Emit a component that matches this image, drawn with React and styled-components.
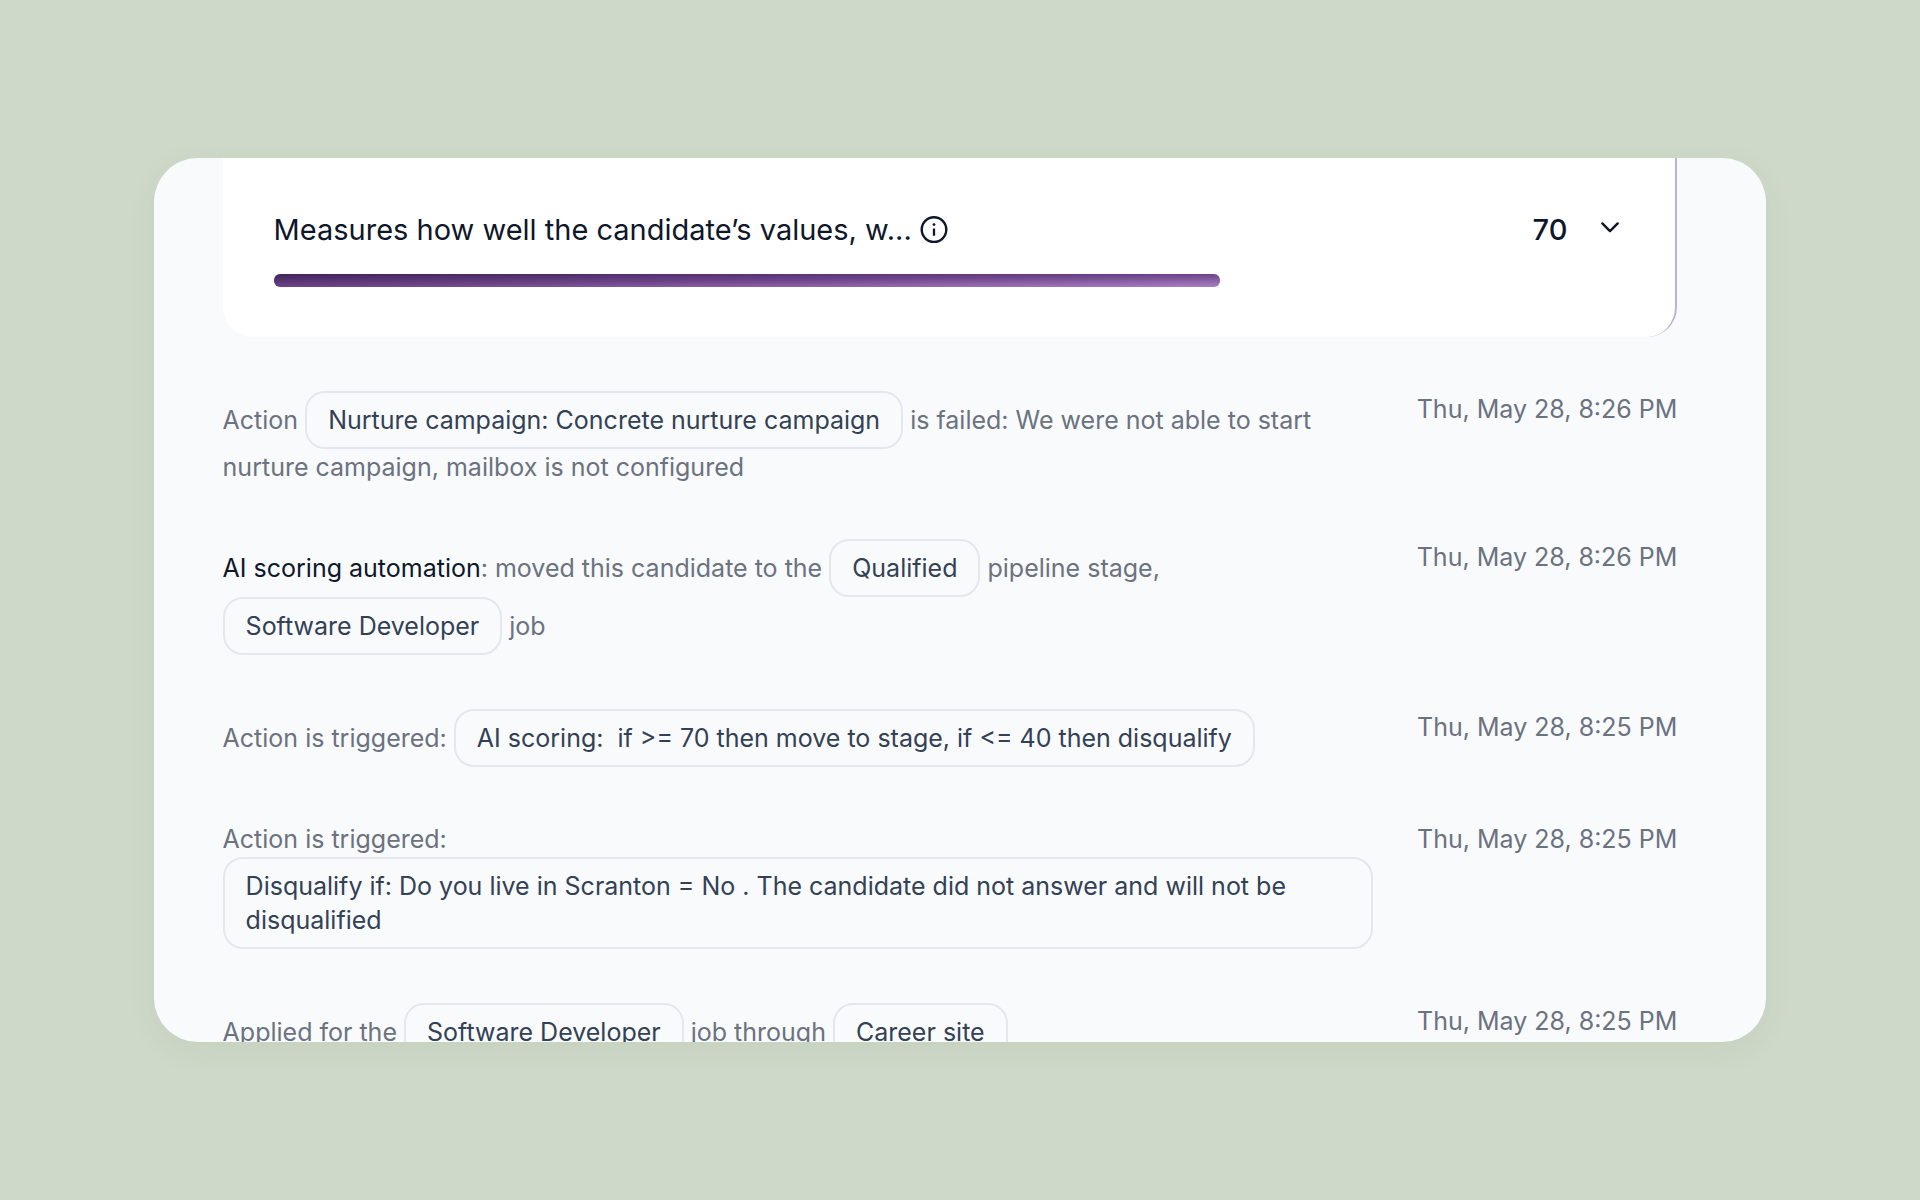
import React from 'react';
import styled, { createGlobalStyle } from 'styled-components';

const COLORS = {
  page: '#ced9c9',
  panel: '#f9fafc',
  card: '#ffffff',
  ink: '#0f172a',
  chipText: '#334155',
  muted: '#6b7280',
  border: '#e5e7eb',
  edge: '#bdb0dc',
};

const ACTIVITY = [
  {
    date: 'Thu, May 28, 8:26 PM',
    parts: [
      'Action ',
      { chip: 'Nurture campaign: Concrete nurture campaign' },
      ' is failed: We were not able to start nurture campaign, mailbox is not configured',
    ],
  },
  {
    date: 'Thu, May 28, 8:26 PM',
    parts: [
      { author: 'AI scoring automation' },
      ': moved this candidate to the ',
      { chip: 'Qualified' },
      ' pipeline stage, ',
      { chip: 'Software Developer' },
      ' job',
    ],
  },
  {
    date: 'Thu, May 28, 8:25 PM',
    parts: [
      'Action is triggered: ',
      { chip: 'AI scoring:\u00a0 if >= 70 then move to stage, if <= 40 then disqualify' },
    ],
  },
  {
    date: 'Thu, May 28, 8:25 PM',
    parts: [
      'Action is triggered: ',
      {
        chip: 'Disqualify if: Do you live in Scranton = No . The candidate did not answer and will not be disqualified',
      },
    ],
  },
  {
    date: 'Thu, May 28, 8:25 PM',
    parts: [
      'Applied for the ',
      { chip: 'Software Developer' },
      ' job through ',
      { chip: 'Career site' },
    ],
  },
];

const InfoIcon = () => (
  <svg width="28" height="28" viewBox="0 0 28 28" fill="none" aria-hidden="true">
    <circle cx="14" cy="13.6" r="12.3" stroke="currentColor" strokeWidth="2.4" />
    <path d="M14 12.6v7.2" stroke="currentColor" strokeWidth="2.3" />
    <circle cx="14" cy="8.6" r="1.4" fill="currentColor" />
  </svg>
);

const ChevronIcon = () => (
  <svg width="30" height="30" viewBox="0 0 30 30" fill="none" aria-hidden="true">
    <path
      d="M7.3 8.4 15 16.1l7.7-7.7"
      stroke="currentColor"
      strokeWidth="2.4"
      strokeLinecap="round"
      strokeLinejoin="round"
    />
  </svg>
);

const renderPart = (part, index) => {
  if (part.chip) {
    return <Chip key={index}>{part.chip}</Chip>;
  }
  if (part.author) {
    return <Author key={index}>{part.author}</Author>;
  }
  return part;
};

const ScoreCard = ({ label, score }) => (
  <Card>
    <CardHeader>
      <CardLabel>
        <CardTitle id="score-label">{label}</CardTitle>
        <IconButton type="button" aria-label="More about this score">
          <InfoIcon />
        </IconButton>
      </CardLabel>
      <CardResult>
        <Score>{score}</Score>
        <IconButton type="button" aria-label="Expand score" aria-expanded="false">
          <ChevronIcon />
        </IconButton>
      </CardResult>
    </CardHeader>
    <Track
      role="progressbar"
      aria-labelledby="score-label"
      aria-valuenow={score}
      aria-valuemin={0}
      aria-valuemax={100}
    >
      <Fill style={{ width: `${score}%` }} />
    </Track>
  </Card>
);

const App = () => {
  return (
    <Page>
      <GlobalStyle />
      <Panel>
        <ScoreCard label="Measures how well the candidate’s values, w..." score={70} />
        <Timeline>
          {ACTIVITY.map((entry, index) => (
            <Entry key={index}>
              <Message>{entry.parts.map(renderPart)}</Message>
              <Time>{entry.date}</Time>
            </Entry>
          ))}
        </Timeline>
      </Panel>
    </Page>
  );
};

const GlobalStyle = createGlobalStyle`
  *, *::before, *::after {
    box-sizing: border-box;
  }

  body {
    margin: 0;
    font-family: Inter, 'Liberation Sans', sans-serif;
    color: ${COLORS.ink};
    background: ${COLORS.page};
  }
`;

const Page = styled.div`
  display: flex;
  height: 100vh;
  padding: 158px 8%;
`;

const Panel = styled.main`
  flex: 1;
  min-width: 0;
  padding: 0 89px 0 69px;
  border-radius: 44px;
  background: ${COLORS.panel};
  box-shadow: 0 8px 32px rgba(60, 80, 50, 0.06);
  overflow: hidden;
`;

const Card = styled.section`
  padding: 54px 50px 50px 51px;
  border-right: 2px solid ${COLORS.edge};
  border-radius: 0 0 30px 30px;
  background: ${COLORS.card};
`;

const CardHeader = styled.div`
  display: flex;
  justify-content: space-between;
  align-items: center;
  margin-bottom: 26px;
`;

const CardLabel = styled.div`
  display: flex;
  align-items: center;
  gap: 8px;
`;

const CardResult = styled.div`
  display: flex;
  align-items: center;
  gap: 28px;
`;

const CardTitle = styled.h2`
  margin: 0;
  font-size: 29px;
  font-weight: 400;
  line-height: 36px;
`;

const Score = styled.span`
  font-size: 29px;
  font-weight: 500;
  line-height: 36px;
`;

const IconButton = styled.button`
  display: flex;
  padding: 0;
  border: 0;
  color: inherit;
  background: none;
  cursor: pointer;
`;

const Track = styled.div`
  height: 13px;
`;

const Fill = styled.div`
  height: 100%;
  border-radius: 6px;
  background: linear-gradient(to bottom right, #41235a, #6d4389 50%, #a880c2);
`;

const Timeline = styled.ol`
  display: flex;
  flex-direction: column;
  gap: 54px;
  margin: 54px 0 0;
  padding: 0;
  list-style: none;
`;

const Entry = styled.li`
  display: grid;
  grid-template-columns: minmax(0, 1fr) auto;
  gap: 44px;
  font-size: 25px;
  line-height: 36px;
  color: ${COLORS.muted};
`;

const Message = styled.p`
  margin: 0;
`;

const Author = styled.span`
  color: ${COLORS.ink};
`;

const Chip = styled.span`
  display: inline-block;
  max-width: 100%;
  padding: 10px 21px;
  border: 2px solid ${COLORS.border};
  border-radius: 20px;
  line-height: 34px;
  color: ${COLORS.chipText};
`;

const Time = styled.time`
  white-space: nowrap;
`;

export default App;
